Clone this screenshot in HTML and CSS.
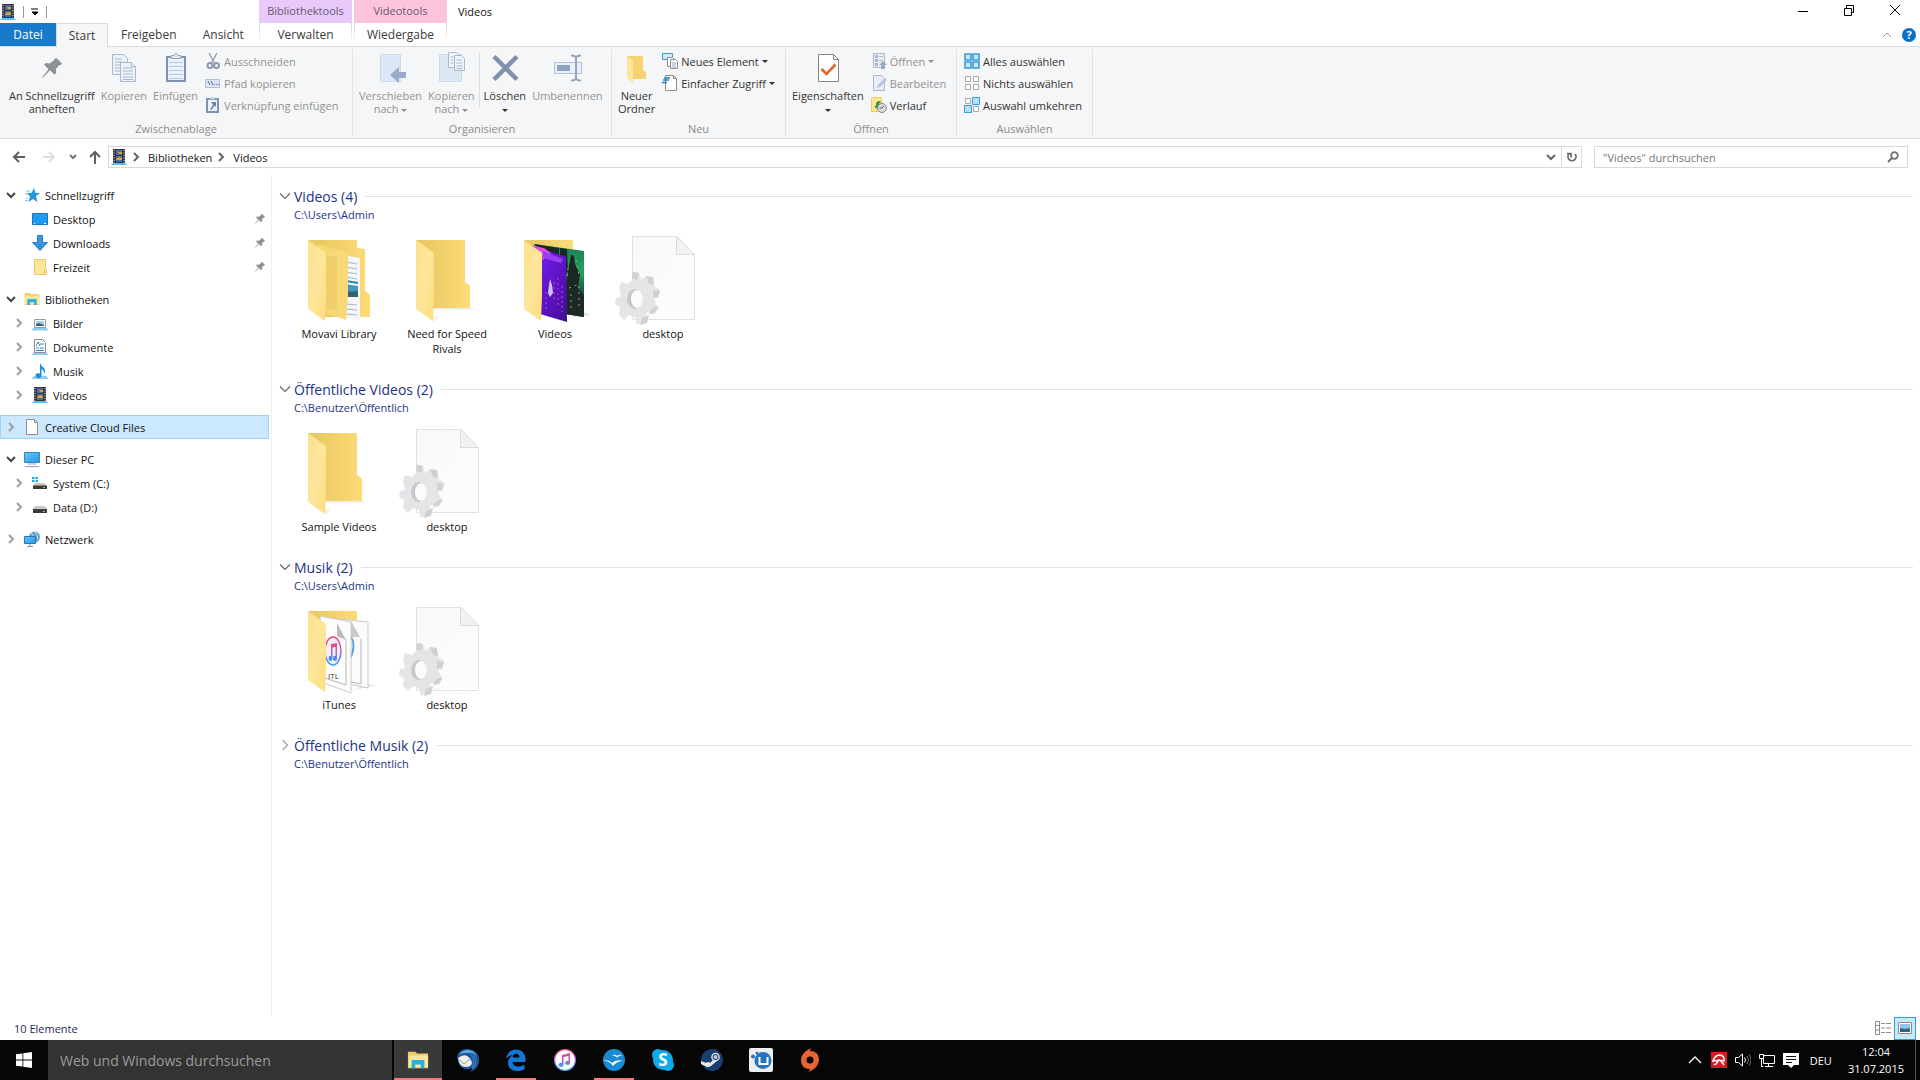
FILE: index.html
```
<!DOCTYPE html>
<html lang="de">
<head>
    <meta charset="UTF-8">
    <meta name="viewport" content="width=device-width, initial-scale=1.0">
    <title>Videos</title>
    <link rel="stylesheet" href="styles.css">
</head>
<body>
    <!-- Gemeinsame Symbole -->
    <svg class="defs" width="0" height="0" aria-hidden="true">
        <defs>
            <linearGradient id="g-front" x1="0" y1="0" x2="1" y2="1">
                <stop offset="0" stop-color="#fbdf8c"/><stop offset=".5" stop-color="#fde69c"/><stop offset="1" stop-color="#fcdc7c"/>
            </linearGradient>
            <linearGradient id="g-back" x1="0" y1="0" x2="1" y2="0">
                <stop offset=".2" stop-color="#ebca66"/><stop offset="1" stop-color="#fddc78"/>
            </linearGradient>
            <linearGradient id="g-doc" x1="0" y1="0" x2="1" y2="1">
                <stop offset="0" stop-color="#f8f8f8"/><stop offset="1" stop-color="#fdfdfd"/>
            </linearGradient>
            <linearGradient id="g-purple" x1="0" y1="0" x2="1" y2="1">
                <stop offset="0" stop-color="#c62fe0"/><stop offset=".3" stop-color="#6a1ae0"/><stop offset=".7" stop-color="#5a10b8"/><stop offset="1" stop-color="#3b0f8a"/>
            </linearGradient>
            <linearGradient id="g-green" x1="0" y1="0" x2="0" y2="1">
                <stop offset="0" stop-color="#1f7d50"/><stop offset=".4" stop-color="#23a35c"/><stop offset=".7" stop-color="#164432"/><stop offset="1" stop-color="#0a1a1c"/>
            </linearGradient>
            <linearGradient id="g-itunes" x1="0" y1="0" x2="0" y2="1">
                <stop offset="0" stop-color="#f5486c"/><stop offset=".5" stop-color="#b65bd8"/><stop offset="1" stop-color="#2fa2ee"/>
            </linearGradient>
            <linearGradient id="g-screen" x1="0" y1="0" x2="1" y2="1">
                <stop offset="0" stop-color="#6cc6f7"/><stop offset="1" stop-color="#1e96ee"/>
            </linearGradient>

            <symbol id="down" viewBox="0 0 16 16"><path d="M4 6l4 4 4-4" fill="none" stroke="currentColor" stroke-width="2"/></symbol>
            <symbol id="right" viewBox="0 0 16 16"><path d="M6 4l4 4-4 4" fill="none" stroke="currentColor" stroke-width="2"/></symbol>
            <symbol id="down-thin" viewBox="0 0 16 16"><path d="M3 5.500l5 5 5-5" fill="none" stroke="currentColor" stroke-width="1.200"/></symbol>
            <symbol id="right-thin" viewBox="0 0 16 16"><path d="M5.500 3l5 5-5 5" fill="none" stroke="currentColor" stroke-width="1.200"/></symbol>
            <symbol id="pin" viewBox="0 0 20 20"><path d="M14.200 0l5.800 5.600-1.500 1.600-1-.3-3.700 4 .4 4-1.600 1.700-4.700-4.400L1 19.500l-1 .5.500-1.200 6-7.600-4.500-4.700L3.700 5l4 .5 4.800-3.700-.2-.9z" fill="currentColor"/></symbol>
            <symbol id="film" viewBox="0 0 16 16">
                <path d="M0 14.500h2L3 13h10l1 1.500h2L15 16H1z" fill="#5cc0ee"/>
                <path d="M2 0h12v14H2z" fill="#33373c"/>
                <path d="M5 1h6v5H5zM5 7h6v6H5z" fill="#4b6ca8"/>
                <path d="M7 3h4v2H8zM5 10l3-2 3 1v2H5z" fill="#e0a33b"/>
                <path d="M3 1v13M13 1v13" stroke="#ececec" stroke-dasharray="1 1.500"/>
            </symbol>
            <symbol id="folder-big" viewBox="0 0 96 96">
                <path d="M34 76h44l-8 2H34zM34 89l7-4-7-1z" fill="#f0f0f0"/>
                <path d="M17 8h49v42l5 4v22H30z" fill="url(#g-back)"/>
                <path d="M17 8l18 13v43l-1 25-17-12z" fill="url(#g-front)"/>
            </symbol>
            <symbol id="gear-doc" viewBox="0 0 96 96">
                <path d="M17.500 4.500H62L79.500 22.500v65h-62z" fill="url(#g-doc)" stroke="#e1e1e1"/>
                <path d="M61.500 4.500v18h18z" fill="#f2f2f2" stroke="#dcdcdc"/>
                <path d="M18 40l6 1 2 7 5-4 7 2 1 8 6 4-2 7-4 2 4 9-4 5-7-1-2 9-8 4-2-8-6-2-5 5-5-5 1-8-5-3 1-6 5-1-2-9 2-6 7 2 4-4z" fill="#e3e5e7"/>
                <path d="M31 44l7 1 1 8-5-1zM38 58l7 1-2 7-5-1zM37 76l7-2-4 7-6 1zM27 86l7-3-2 8-7 2zM18 40l6 1-2 7-5-2z" fill="#cfd1d4"/>
                <ellipse cx="20" cy="67" rx="8" ry="10" fill="#c6c9cc"/>
                <ellipse cx="22" cy="67" rx="6" ry="9" fill="#fbfbfb"/>
            </symbol>
            <symbol id="explorer" viewBox="0 0 24 20">
                <path d="M1 1h8l2 2h12v16H1z" fill="#f0cd6a"/><path d="M2 5h21v13H2z" fill="#fde59a"/>
                <path d="M5 11q0-1 1-1h12q1 0 1 1v8h-4v-4H9v4H5z" fill="#27b2e2"/>
            </symbol>
            <symbol id="itunes" viewBox="0 0 24 24">
                <circle cx="12" cy="12" r="10.500" fill="#fafafe" stroke="url(#g-itunes)" stroke-width="1.200"/>
                <path d="M9 7l8-2v10a2.400 2 0 1 1-1.500-2V8L10.500 9v8A2.400 2 0 1 1 9 15z" fill="url(#g-itunes)"/>
            </symbol>
        </defs>
    </svg>

    <div class="window">
        <header class="titlebar">
            <div class="tabs-side">
                <div class="quick-access">
                    <svg width="16" height="16"><use href="#film"/></svg>
                    <span class="quick-line"></span>
                    <button class="plain" aria-label="Symbolleiste anpassen"><svg width="8" height="8" viewBox="0 0 8 8"><path d="M0 1h7M1 4h6L4 7z" stroke="#000" fill="#000"/></svg></button>
                    <span class="quick-line"></span>
                </div>
                <nav class="tabs">
                    <button class="tab tab-file">Datei</button>
                    <button class="tab tab-active">Start</button>
                    <button class="tab tab-wide">Freigeben</button>
                    <button class="tab tab-wide">Ansicht</button>
                </nav>
            </div>
            <div class="context context-library">
                <span class="context-name">Bibliothektools</span>
                <button class="tab">Verwalten</button>
            </div>
            <div class="context context-video">
                <span class="context-name">Videotools</span>
                <button class="tab">Wiedergabe</button>
            </div>
            <div class="title-side">
                <div class="title-row">
                    <h1>Videos</h1>
                    <div class="window-buttons">
                        <button class="plain" aria-label="Minimieren"><svg width="12" height="12"><path d="M1 7.500h10" stroke="#000"/></svg></button>
                        <button class="plain" aria-label="Verkleinern"><svg width="12" height="12"><path d="M1.500 4.500h7v7h-7zM3.500 4V1.500h7v7H9" fill="none" stroke="#000"/></svg></button>
                        <button class="plain" aria-label="Schließen"><svg width="12" height="12"><path d="M1 1l10 10M11 1L1 11" stroke="#000"/></svg></button>
                    </div>
                </div>
                <div class="help-row">
                    <button class="plain" aria-label="Menüband minimieren"><svg width="10" height="6"><path d="M1 5l4-4 4 4" fill="none" stroke="#9a9a9a"/></svg></button>
                    <button class="help" aria-label="Hilfe">?</button>
                </div>
            </div>
        </header>

        <section class="ribbon">
            <div class="group group-clipboard">
                <div class="group-body">
                    <button class="big">
                        <svg width="32" height="32" viewBox="0 0 32 32"><use href="#pin" x="6" y="6" width="20" height="20" color="#8b9196"/></svg>
                        <span>An Schnellzugriff<br>anheften</span>
                    </button>
                    <button class="big" disabled>
                        <svg width="32" height="32" viewBox="0 0 32 32" fill="#edf2fa" stroke="#a9b7cf"><path d="M4.500 2.500h11l4 4v16h-15z"/><path d="M7 7h7M7 10h7M7 13h7M7 16h5M7 19h5"/><path d="M12.500 10.500h11l4 4v15h-15z"/><path d="M23.500 10.500v4h4M15 16h10M15 19h10M15 22h10M15 25h10M15 27.500h10"/></svg>
                        <span>Kopieren</span>
                    </button>
                    <button class="big" disabled>
                        <svg width="32" height="32" viewBox="0 0 32 32"><path d="M7 5h18v24H7z" fill="#ecf2fc" stroke="#8193b2" stroke-width="2"/><path d="M11 3.500h3a2 2 0 0 1 4 0h3v3H11z" fill="#dfe4ec" stroke="#9ba6b8"/><path d="M9 10.500h14M9 14.500h14M9 18.500h14M9 22.500h14M9 26.500h14" stroke="#b9c9e4"/></svg>
                        <span>Einfügen</span>
                    </button>
                    <div class="small-list">
                        <button class="small" disabled><svg width="16" height="16" viewBox="0 0 16 16" fill="none" stroke="#8c99b0"><path d="M4 0l5.500 10M12 0L6.500 10" stroke-width="1.300"/><circle cx="5" cy="12.500" r="2.500" stroke-width="2"/><circle cx="11.500" cy="12.500" r="2.500" stroke-width="2"/></svg>Ausschneiden</button>
                        <button class="small" disabled><svg width="16" height="16" viewBox="0 0 16 16" fill="none"><path d="M.5 4.500h14v8H.5z" fill="#dce5f4" stroke="#b2c1da"/><path d="M3 6l2 4M6 6l2 4M9 9.500h1M11 9.500h1M13 9.500h1" stroke="#5b6f95"/></svg>Pfad kopieren</button>
                        <button class="small" disabled><svg width="16" height="16" viewBox="0 0 16 16"><path d="M2 2h11v13H2z" fill="#eef3fb" stroke="#8193b2" stroke-width="2"/><path d="M5 .5h5v2H5z" fill="#bcc7d9"/><path d="M6 5h5v5L9.500 8.500 6.500 13 5 12l3-4z" fill="#6e83aa"/></svg>Verknüpfung einfügen</button>
                    </div>
                </div>
                <div class="group-name">Zwischenablage</div>
            </div>

            <div class="group">
                <div class="group-body">
                    <button class="big" disabled>
                        <svg width="32" height="32" viewBox="0 0 32 32"><path d="M5.500 2.500h20v27h-20z" fill="#dce8f6" stroke="#ccdaec"/><path d="M15 23l9-8v5h7v6h-7v5z" fill="#9aabc9"/></svg>
                        <span>Verschieben<br>nach <i class="caret"></i></span>
                    </button>
                    <button class="big" disabled>
                        <svg width="32" height="32" viewBox="0 0 32 32"><path d="M4.500 2.500h22v27h-22z" fill="#dce8f6" stroke="#ccdaec"/><g fill="#f0f5fc" stroke="#a9b7cf"><path d="M13.500.5h8l3 3v12h-11z"/><path d="M19.500 3.500h7l3 3v12h-10z"/><path d="M21.500 8h5M21.500 11h6M21.500 14h6M21.500 16.500h6M15.500 5h3M15.500 8h3M15.500 11h3"/></g></svg>
                        <span>Kopieren<br>nach <i class="caret"></i></span>
                    </button>
                    <span class="inner-line"></span>
                    <button class="big">
                        <svg width="32" height="32" viewBox="0 0 32 32"><path d="M5 4.500l23 23M28 4.500L5 27.500" stroke="#8091af" stroke-width="4.500"/></svg>
                        <span>Löschen<br><i class="caret"></i></span>
                    </button>
                    <button class="big" disabled>
                        <svg width="32" height="32" viewBox="0 0 32 32"><path d="M3.500 10.500h27v11h-27z" fill="#e8f0fb" stroke="#adc0dc"/><path d="M6 13h13v6H6z" fill="#8fa2c3"/><path d="M20 3.500q5 0 5 3 0-3 5-3M20 28.500q5 0 5-3 0 3 5 3M25 5v22" fill="none" stroke="#94a4c0" stroke-width="2"/></svg>
                        <span>Umbenennen</span>
                    </button>
                </div>
                <div class="group-name">Organisieren</div>
            </div>

            <div class="group">
                <div class="group-body">
                    <button class="big">
                        <svg width="32" height="32" viewBox="0 0 32 32"><path d="M6 4h16v14l3 2v7H10z" fill="#f6d36f"/><path d="M6 4l6 4v23l-6-5z" fill="#fde59a"/></svg>
                        <span>Neuer<br>Ordner</span>
                    </button>
                    <div class="small-list">
                        <button class="small"><svg width="16" height="16" viewBox="0 0 16 16" fill="#fff" stroke="#8c8c8c"><path d="M.5.500h10v6H.5z" fill="#cfeafa" stroke="#4a9cc8"/><path d="M5.500 4.500h5l2 2v7h-7z"/><path d="M8.500 6.500h5l2 2v7h-7z"/><path d="M10 10h4M10 12h4M10 14h4" stroke="#9aa7b8"/></svg>Neues Element <i class="caret"></i></button>
                        <button class="small"><svg width="16" height="16" viewBox="0 0 16 16"><path d="M3.500.500h8l3 3v12h-11z" fill="#fff" stroke="#8c8c8c"/><path d="M11.500.5v3h3" fill="none" stroke="#8c8c8c"/><path d="M2 3h6M1 5h6M0 7.500h5" stroke="#2285bf" stroke-width="1.400"/></svg>Einfacher Zugriff <i class="caret"></i></button>
                    </div>
                </div>
                <div class="group-name">Neu</div>
            </div>

            <div class="group">
                <div class="group-body">
                    <button class="big">
                        <svg width="32" height="32" viewBox="0 0 32 32"><path d="M6.500 2.500h15l5 5v22h-20z" fill="#fff" stroke="#858585"/><path d="M21.500 2.500v5h5" fill="none" stroke="#858585"/><path d="M9.500 17l5 5 9-9.500" fill="none" stroke="#e4622c" stroke-width="2.600"/></svg>
                        <span>Eigenschaften<br><i class="caret"></i></span>
                    </button>
                    <div class="small-list">
                        <button class="small" disabled><svg width="16" height="16" viewBox="0 0 16 16"><path d="M2.500.5h11v14h-11z" fill="#e8eef8" stroke="#a9b7cf"/><path d="M4 2h3v3H4zM4 6h3v3H4zM4 10h3v3H4z" fill="#a9b7cf"/><path d="M8 3.500h4M8 7.500h4" stroke="#a9b7cf"/><path d="M12 8l4 4h-2v4h-4v-4H8z" fill="#9aa8c0"/></svg>Öffnen <i class="caret"></i></button>
                        <button class="small" disabled><svg width="16" height="16" viewBox="0 0 16 16"><path d="M2.500.5h8l3 3v12h-11z" fill="#e8eef8" stroke="#a9b7cf"/><path d="M6 13l1-3 7-7 2 2-7 7z" fill="#b6c3da"/></svg>Bearbeiten</button>
                        <button class="small"><svg width="16" height="16" viewBox="0 0 16 16"><path d="M.5.500h10v14H.5z" fill="#fde794" stroke="#e8cf62"/><path d="M9 4Q4 4 5 9H3l4 4 3-4H8q-.5-3 2-4z" fill="#2f9a33"/><circle cx="11" cy="11" r="4.500" fill="#ddd" stroke="#888"/><path d="M11 11l2-2M11 11H8.500" stroke="#555"/></svg>Verlauf</button>
                    </div>
                </div>
                <div class="group-name">Öffnen</div>
            </div>

            <div class="group">
                <div class="group-body">
                    <div class="small-list">
                        <button class="small"><svg width="16" height="16" viewBox="0 0 16 16"><path d="M1 1h6v6H1zM9 1h6v6H9zM1 9h6v6H1zM9 9h6v6H9z" fill="#c5e7fb" stroke="#3c9ad8" stroke-width="1.600"/></svg>Alles auswählen</button>
                        <button class="small"><svg width="16" height="16" viewBox="0 0 16 16"><path d="M1.500 1.500h5v5h-5zM9.500 1.500h5v5h-5zM1.500 9.500h5v5h-5zM9.500 9.500h5v5h-5z" fill="#fff" stroke="#a8a8a8"/></svg>Nichts auswählen</button>
                        <button class="small"><svg width="16" height="16" viewBox="0 0 16 16"><path d="M1.500 1.500h5v5h-5zM9.500 9.500h5v5h-5z" fill="#fff" stroke="#a8a8a8"/><path d="M8.500.5h7v7h-7zM.5 8.500h7v7h-7z" fill="#b5e1fa" stroke="#3c9ad8"/></svg>Auswahl umkehren</button>
                    </div>
                </div>
                <div class="group-name">Auswählen</div>
            </div>
        </section>

        <div class="address-row">
            <div class="history">
                <button class="plain" aria-label="Zurück"><svg width="14" height="14" viewBox="0 0 14 14"><path d="M13 7H2M7 2L2 7l5 5" fill="none" stroke="#5f5f5f" stroke-width="2"/></svg></button>
                <button class="plain" aria-label="Vorwärts" disabled><svg width="14" height="14" viewBox="0 0 14 14"><path d="M1 7h11M7 2l5 5-5 5" fill="none" stroke="#dedede" stroke-width="2"/></svg></button>
                <button class="plain recent" aria-label="Zuletzt besucht"><svg width="8" height="6"><path d="M1 1l3 3 3-3" fill="none" stroke="#777" stroke-width="2"/></svg></button>
                <button class="plain" aria-label="Nach oben"><svg width="14" height="14" viewBox="0 0 14 14"><path d="M7 14V2M2 7l5-5 5 5" fill="none" stroke="#5f5f5f" stroke-width="2"/></svg></button>
            </div>
            <div class="address">
                <svg width="16" height="16"><use href="#film"/></svg>
                <svg class="crumb-arrow" viewBox="3 3 10 10"><use href="#right" width="16" height="16"/></svg>
                <a href="#">Bibliotheken</a>
                <svg class="crumb-arrow" viewBox="3 3 10 10"><use href="#right" width="16" height="16"/></svg>
                <a href="#">Videos</a>
                <button class="plain address-drop" aria-label="Vorherige Orte"><svg width="16" height="16"><use href="#down"/></svg></button>
                <button class="plain refresh" aria-label="Aktualisieren"><svg width="12" height="12" viewBox="0 0 12 12"><path d="M9 3a4 4 0 1 1-6 0M1 2.500h4v4" fill="none" stroke="#666" stroke-width="1.700"/></svg></button>
            </div>
            <div class="search">
                <input type="text" aria-label="Suche" placeholder="&quot;Videos&quot; durchsuchen">
                <svg width="12" height="12" viewBox="0 0 12 12"><circle cx="7.500" cy="4.500" r="3.300" fill="none" stroke="#6e6e6e" stroke-width="1.800"/><path d="M5 7l-4 4" stroke="#6e6e6e" stroke-width="2"/></svg>
            </div>
        </div>

        <div class="content">
            <nav class="tree">
                <ul>
                    <li class="open"><svg class="toggle"><use href="#down"/></svg><svg class="icon" viewBox="0 0 16 16"><path d="M10 1l1.500 5H16l-4 3 1.500 6L9 12l-4.500 3L6 9.500 3 6h4.500z" fill="#2b96dc"/><path d="M2 4h4M1 7h3M2 11h2M1 13.500h3" stroke="#74c3f1"/></svg><a href="#">Schnellzugriff</a></li>
                    <li class="child"><span class="toggle"></span><svg class="icon" viewBox="0 0 16 16"><path d="M.5 2.500h15v11H.5z" fill="#1d9bf5" stroke="#1579bf"/><path d="M2 12.500h1M12 12.500h2" stroke="#fff"/></svg><a href="#">Desktop</a><svg class="pinned"><use href="#pin"/></svg></li>
                    <li class="child"><span class="toggle"></span><svg class="icon" viewBox="0 0 16 16"><path d="M5.500.500h5v7h5L8 15.500.5 7.500h5z" fill="#3b92de" stroke="#2b7cc6"/></svg><a href="#">Downloads</a><svg class="pinned"><use href="#pin"/></svg></li>
                    <li class="child"><span class="toggle"></span><svg class="icon" viewBox="0 0 16 16"><path d="M2.500.5h11v10l1 1v4h-12z" fill="#fde599" stroke="#e7c765"/><path d="M12.500 15v-5" stroke="#e7c765"/></svg><a href="#">Freizeit</a><svg class="pinned"><use href="#pin"/></svg></li>
                </ul>
                <ul>
                    <li class="open"><svg class="toggle"><use href="#down"/></svg><svg class="icon" viewBox="0 0 16 16"><use href="#explorer" width="16" height="16"/></svg><a href="#">Bibliotheken</a></li>
                    <li class="child"><svg class="toggle"><use href="#right"/></svg><svg class="icon" viewBox="0 0 16 16"><path d="M0 14.500l2-2h12l2 2v1H0z" fill="#8ecdf0"/><path d="M2.500 4.500h11v8h-11z" fill="#fff" stroke="#9a9a9a"/><path d="M4 6h8v5H4z" fill="#a4d0ef"/><path d="M4 9l3-1 5 2v1H4z" fill="#3f5f74"/></svg><a href="#">Bilder</a></li>
                    <li class="child"><svg class="toggle"><use href="#right"/></svg><svg class="icon" viewBox="0 0 16 16"><path d="M0 15l2-2h12l2 2v1H0z" fill="#8ecdf0"/><path d="M2.500.500h8l3 3v10h-11z" fill="#fff" stroke="#8d8d8d"/><path d="M4 7l2-4 2 4M8 5h4M4 9h3M8 9h4M4 11.500h8" fill="none" stroke="#3389b6"/></svg><a href="#">Dokumente</a></li>
                    <li class="child"><svg class="toggle"><use href="#right"/></svg><svg class="icon" viewBox="0 0 16 16"><path d="M0 15l2-2h12l2 2v1H0z" fill="#8ecdf0"/><path d="M8 0q1 3 4 5 2 2 0 6 0-4-2.500-5v6.500a3 2.500 0 1 1-1.500-2z" fill="#1790e0"/></svg><a href="#">Musik</a></li>
                    <li class="child"><svg class="toggle"><use href="#right"/></svg><svg class="icon"><use href="#film"/></svg><a href="#">Videos</a></li>
                </ul>
                <ul>
                    <li class="selected"><svg class="toggle"><use href="#right"/></svg><svg class="icon" viewBox="0 0 16 16"><path d="M2.500.500h8l3 3v12h-11z" fill="#fdfdfd" stroke="#8f8f8f"/><path d="M10.500.5v3h3" fill="none" stroke="#8f8f8f"/></svg><a href="#">Creative Cloud Files</a></li>
                </ul>
                <ul>
                    <li class="open"><svg class="toggle"><use href="#down"/></svg><svg class="icon" viewBox="0 0 16 16"><path d="M.5 1.500h15v10H.5z" fill="url(#g-screen)" stroke="#3988b7"/><path d="M4 13h8M1 15.500h14" stroke="#8ba3bf"/></svg><a href="#">Dieser PC</a></li>
                    <li class="child"><svg class="toggle"><use href="#right"/></svg><svg class="icon" viewBox="0 0 16 16"><path d="M0 2h2.500v2H0zM3.500 2H6v2H3.500zM0 5h2.500v2H0zM3.500 5H6v2H3.500z" fill="#20ace8"/><path d="M3 8h9l3 3H1z" fill="#c9c9c9"/><path d="M1 10.500h14V14H1z" fill="#3b3b3b"/><path d="M11 12.500h2" stroke="#58e05c"/></svg><a href="#">System (C:)</a></li>
                    <li class="child"><svg class="toggle"><use href="#right"/></svg><svg class="icon" viewBox="0 0 16 16"><path d="M3 7h10l2 3H1z" fill="#c9c9c9"/><path d="M1 10h14v4H1z" fill="#3b3b3b"/><path d="M11 12.500h2" stroke="#58e05c"/></svg><a href="#">Data (D:)</a></li>
                </ul>
                <ul>
                    <li><svg class="toggle"><use href="#right"/></svg><svg class="icon" viewBox="0 0 16 16"><circle cx="10.500" cy="6" r="5.500" fill="#5fa4cd"/><path d="M7 2q3 2 2 5M11 1q3 3 3 7" fill="none" stroke="#c8e6f6"/><path d="M.5 5.500h11v7H.5z" fill="url(#g-screen)" stroke="#2a78a8"/><path d="M6 13v2M3 15.500h6" stroke="#7397b0"/></svg><a href="#">Netzwerk</a></li>
                </ul>
            </nav>

            <main class="files">
                <section class="folder-group">
                    <h2><svg width="16" height="16"><use href="#down-thin"/></svg>Videos (4)</h2>
                    <p class="path">C:\Users\Admin</p>
                    <div class="items">
                        <figure>
                            <svg viewBox="0 0 96 96">
                                <path d="M17 8h49v8l8 1v42l5 4v22H30z" fill="url(#g-back)"/>
                                <path d="M52 23l17 3v63l-17-3z" fill="#f4f6f8"/>
                                <path d="M55 30l11 2M55 35l11 2M55 40l11 2M55 45l11 2M55 72l11 1M55 77l11 1M55 82l11 1" stroke="#9db8cd"/><path d="M55 49l12 2" stroke="#2a84b8" stroke-width="2"/><path d="M54 52l13 2v11H54z" fill="#4595bd"/><path d="M54 60l13-1v6H54z" fill="#2f6172"/>
                                <path d="M26 12l31 9v43l-2 24-22-8z" fill="#f8d978"/>
                                <path d="M33 24h13v52l-13 3z" fill="#ebc863" opacity=".6"/>
                                <path d="M17 8l18 13v43l-1 25-17-12z" fill="url(#g-front)"/>
                            </svg>
                            <figcaption>Movavi Library</figcaption>
                        </figure>
                        <figure>
                            <svg viewBox="0 0 96 96"><use href="#folder-big"/></svg>
                            <figcaption>Need for Speed Rivals</figcaption>
                        </figure>
                        <figure>
                            <svg viewBox="0 0 96 96">
                                <path d="M17 8h49v68H30z" fill="url(#g-back)"/>
                                <path d="M60 86l24-3-7-3z" fill="#e4e4e4"/>
                                <path d="M27 12l50 7v66l-26-4z" fill="url(#g-green)"/>
                                <path d="M27 12l25 4v20zM53 16l7 1 1 22-8 12zM64 23l3 1 1 8 5 10-2 14 6 8v21l-18-3V50z" fill="#1b2826"/>
                                <path d="M69 28l3 16M61 36l-1 10M62 56l8-3M64 62v16M72 54v22" stroke="#7fae92" stroke-dasharray="2 4"/>
                                <path d="M23 13l36 12 1 65-27-8z" fill="url(#g-purple)"/>
                                <path d="M23 13l14 3 7 5-8 7z" fill="#e04be0"/>
                                <path d="M36 19l20 8-2 4-18-5z" fill="#9a3cf0"/>
                                <path d="M42 53l1-6 2 6 1 8-3 4-2-4z" fill="#cfc4ff"/>
                                <path d="M39 60v18M47 50v20M51 46v30M55 54v26" stroke="#a050ee" stroke-dasharray="2 3"/>
                                <path d="M17 8l18 13v43l-1 25-17-12z" fill="url(#g-front)"/>
                            </svg>
                            <figcaption>Videos</figcaption>
                        </figure>
                        <figure>
                            <svg viewBox="0 0 96 96"><use href="#gear-doc"/></svg>
                            <figcaption>desktop</figcaption>
                        </figure>
                    </div>
                </section>

                <section class="folder-group">
                    <h2><svg width="16" height="16"><use href="#down-thin"/></svg>Öffentliche Videos (2)</h2>
                    <p class="path">C:\Benutzer\Öffentlich</p>
                    <div class="items">
                        <figure>
                            <svg viewBox="0 0 96 96"><use href="#folder-big"/></svg>
                            <figcaption>Sample Videos</figcaption>
                        </figure>
                        <figure>
                            <svg viewBox="0 0 96 96"><use href="#gear-doc"/></svg>
                            <figcaption>desktop</figcaption>
                        </figure>
                    </div>
                </section>

                <section class="folder-group">
                    <h2><svg width="16" height="16"><use href="#down-thin"/></svg>Musik (2)</h2>
                    <p class="path">C:\Users\Admin</p>
                    <div class="items">
                        <figure>
                            <svg viewBox="0 0 96 96">
                                <path d="M17 8h49v68H30z" fill="url(#g-back)"/>
                                <path d="M60 87l25-4-7-2z" fill="#e8e8e8"/>
                                <path d="M48 16l29 3v66l-20-4z" fill="#fbfbfb" stroke="#cacaca"/>
                                <path d="M60 18l9 16h-9z" fill="#c9c9c9"/>
                                <path d="M60 34q5 8 0 20" fill="none" stroke="#5c9fd8" stroke-width="2"/>
                                <path d="M60 79l10 2V36" fill="none" stroke="#b5b5b5"/>
                                <path d="M29 13l31 6v71l-27-10z" fill="#fdfdfd" stroke="#cacaca"/>
                                <path d="M46 20l9 17-9-4z" fill="#b8b8b8"/><path d="M55 36v46l-21-7" fill="none" stroke="#b5b5b5"/>
                                <ellipse cx="42" cy="48" rx="8" ry="14" fill="#eef0f8" stroke="url(#g-itunes)" stroke-width="1.500"/>
                                <path d="M40 41l6-1v15a2 2.500 0 1 1-1.500-2v-9l-3 .5v11A2 2.500 0 1 1 40 53z" fill="url(#g-itunes)"/>
                                <text x="37" y="76" font-size="8" fill="#333">ITL</text>
                                <path d="M17 8l18 13v43l-1 25-17-12z" fill="url(#g-front)"/>
                            </svg>
                            <figcaption>iTunes</figcaption>
                        </figure>
                        <figure>
                            <svg viewBox="0 0 96 96"><use href="#gear-doc"/></svg>
                            <figcaption>desktop</figcaption>
                        </figure>
                    </div>
                </section>

                <section class="folder-group closed">
                    <h2><svg width="16" height="16"><use href="#right-thin"/></svg>Öffentliche Musik (2)</h2>
                    <p class="path">C:\Benutzer\Öffentlich</p>
                </section>
            </main>
        </div>

        <footer class="statusbar">
            <span class="count">10 Elemente</span>
            <div class="views">
                <button class="plain" aria-label="Details"><svg width="16" height="14"><path d="M.5.500h4v13h-4zM.5 4.500h4M.5 9h4" fill="none" stroke="#8a8a8a"/><path d="M6 2.500h4M11 2.500h5M6 7h4M11 7h5M6 11.500h4M11 11.500h5" stroke="#8a8a8a"/></svg></button>
                <button class="plain view-active" aria-label="Große Symbole"><svg width="14" height="12"><path d="M.5.500h13v11H.5z" fill="#fff" stroke="#8a8a8a"/><path d="M2 2h10v8H2z" fill="#8cc5ea"/><path d="M2 6l5 1 5-1v4H2z" fill="#34647b"/></svg></button>
            </div>
        </footer>
    </div>

    <footer class="taskbar">
        <button class="start" aria-label="Start"><svg width="16" height="16" viewBox="0 0 16 16"><path d="M0 2.300l6.500-.9v6.200H0zM7.300 1.300L16 0v7.600H7.300zM0 8.400h6.500v6.200L0 13.700zM7.300 8.400H16V16l-8.700-1.200z" fill="#fff"/></svg></button>
        <input class="task-search" type="text" aria-label="Suche" placeholder="Web und Windows durchsuchen">
        <div class="apps">
            <button class="app running current" aria-label="Explorer"><svg width="22" height="20" viewBox="0 0 24 20"><use href="#explorer"/></svg></button>
            <button class="app" aria-label="Thunderbird"><svg width="24" height="24" viewBox="0 0 24 24"><path d="M2 8Q5 0 13 1q11 1 11 11 0 9-9 12 2-2 2-4-6 3-11-1-3-3-4-11z" fill="#1c579c"/><path d="M4 7q3-5 9-5 7 1 9 7-4-5-9-4-5-1-9 2z" fill="#62b1e4"/><path d="M19 8q4 6-1 13M16 6q5 6 1 14" fill="none" stroke="#3a86c8"/><path d="M3 10q5-4 9-2 4 2 5 7-1 4-6 4-7 0-8-9z" fill="#f1efe6"/><path d="M3 11l6 5 6-5" fill="none" stroke="#a8a08c"/></svg></button>
            <button class="app running" aria-label="Edge"><svg width="24" height="24" viewBox="0 0 24 24"><path d="M2 11C3 4.500 7 1.500 12 1.500c6 0 9.500 4.500 9.500 9.500v3H8.500c.2 3 2.500 4.500 5.500 4.500 2.500 0 4.500-.6 6.500-1.800v4.500c-2 1.200-4.500 1.800-7 1.800C7.500 23 4 19.500 4 15c0-3.500 2-6.500 5-8-2.500.2-5 1.500-7 4zm6.500-1.500h7c0-2.500-1.300-3.800-3.300-3.800S9 7.200 8.500 9.500z" fill="#1277d7"/></svg></button>
            <button class="app" aria-label="iTunes"><svg width="24" height="24"><use href="#itunes"/></svg></button>
            <button class="app running" aria-label="OpenOffice"><svg width="24" height="24" viewBox="0 0 24 24"><circle cx="12" cy="12" r="11" fill="#1a8bd3"/><path d="M1 12.500q6-1 9 2.500 4-4 11-2-6 0-10 5-3-5-10-5.500zM10 7q4-1 5 1 2-2 6-1-4 0-6 2.500-2-2-5-2.500z" fill="#fff"/></svg></button>
            <button class="app" aria-label="Skype"><svg width="24" height="24" viewBox="0 0 24 24"><circle cx="7" cy="7" r="6" fill="#12a9ea"/><circle cx="17" cy="17" r="6" fill="#12a9ea"/><circle cx="12" cy="12" r="10" fill="#12a9ea"/><text x="12" y="18" text-anchor="middle" font-size="17" font-weight="700" fill="#fff">S</text></svg></button>
            <button class="app" aria-label="Steam"><svg width="24" height="24" viewBox="0 0 24 24"><circle cx="12" cy="12" r="11" fill="#183f6e"/><path d="M1 13l8 3 6-6 3 2-7 6-4 1-6-3z" fill="#e6e8eb"/><circle cx="15.500" cy="9" r="3.600" fill="#183f6e" stroke="#e6e8eb" stroke-width="1.400"/><circle cx="15.500" cy="9" r="2" fill="#c7cbd1"/><circle cx="8" cy="16.500" r="2.500" fill="#e6e8eb"/></svg></button>
            <button class="app" aria-label="Uplay"><svg width="24" height="24" viewBox="0 0 24 24"><path d="M2 0h20q2 0 2 2v20q0 2-2 2H2q-2 0-2-2V2q0-2 2-2z" fill="#eceef0"/><circle cx="14" cy="12.500" r="8.500" fill="#2672bd"/><circle cx="4" cy="8.500" r="2" fill="#2672bd"/><circle cx="8" cy="5" r="1.500" fill="#2672bd"/><path d="M10.500 9v7h8V9" fill="none" stroke="#fff" stroke-width="2"/></svg></button>
            <button class="app" aria-label="Origin"><svg width="24" height="24" viewBox="0 0 24 24"><path d="M13 0q-1 2-1 3 9 0 9 9 0 7-10 12 1-2 1-3-9 0-9-9 0-7 10-12zM12 8.500a3.500 3.500 0 1 0 0 7 3.500 3.500 0 1 0 0-7z" fill="#ea6333"/></svg></button>
        </div>
        <div class="tray">
            <svg width="16" height="16"><path d="M2 11l6-6 6 6" fill="none" stroke="#fff" stroke-width="1.300"/></svg>
            <svg width="16" height="16"><path d="M0 0h16v16H0z" fill="#dd1a22"/><path d="M2 9Q4 3 9 3q5 1 4 6-2-1-3 0-2-2-4 0-2-1-4 0zM8 8l-3 4q-1 1-2 0M10 9l3 4" fill="none" stroke="#fff" stroke-width="1.400"/></svg>
            <svg width="16" height="16" fill="none"><path d="M.5 5.500h3l4-3.500v12l-4-3.500h-3z" stroke="#fff"/><path d="M9.500 5.500q2 2.500 0 5" stroke="#fff"/><path d="M12 4q3 4 0 8M14 2.500q4 5.500 0 11" stroke="#777"/></svg>
            <svg width="16" height="16" fill="none" stroke="#fff"><path d="M4 3.500h11.500v8h-11V7M.5 2.500h4v4h-4zM2.500 6.500v8h2M9.500 11.500v3M6 14.500h8"/></svg>
            <svg width="16" height="16"><path d="M0 1h16v12h-5l-3 3-3-3H0z" fill="#fff"/><path d="M3 4.500h10M3 7.500h10M3 10.500h6" stroke="#111"/></svg>
            <span>DEU</span>
            <time class="clock">12:04<br>31.07.2015</time>
        </div>
    </footer>
</body>
</html>
```
FILE: styles.css
```
* {
    box-sizing: border-box;
}
body {
    margin: 0;
    min-height: 100vh;
    display: flex;
    flex-direction: column;
    font-family: "Segoe UI", "Open Sans", "Noto Sans", sans-serif;
    font-size: 11px;
    line-height: 15px;
    color: #111;
    background: #fff;
}
button, input {
    font: inherit;
    color: inherit;
    border: 0;
    padding: 0;
    background: none;
}
svg {
    flex: none;
    display: block;
}
a {
    color: inherit;
    text-decoration: none;
}
.defs {
    position: absolute;
}
.window {
    flex: 1;
    display: flex;
    flex-direction: column;
}
.plain {
    display: flex;
    align-items: center;
    justify-content: center;
}

/* Titelleiste und Register */
.titlebar {
    display: flex;
    height: 46px;
    gap: 2px;
}
.tabs-side {
    width: 257px;
}
.quick-access {
    display: flex;
    align-items: center;
    height: 23px;
    gap: 7px;
}
.quick-line {
    width: 1px;
    height: 12px;
    background: #999;
}
.tabs {
    display: flex;
    height: 24px;
}
.tab {
    height: 23px;
    font-size: 12px;
    color: #3b3b3b;
}
.tab-file {
    width: 56px;
    color: #fff;
    background: #1979ca;
}
.tab-active {
    width: 52px;
    height: 24px;
    position: relative;
    border: 1px solid #dadbdc;
    border-bottom: 0;
    background: #f5f6f7;
}
.tab-wide {
    flex: 1;
    padding-left: 7px;
}
.context {
    width: 93px;
    display: flex;
    flex-direction: column;
    text-align: center;
}
.context-name {
    height: 23px;
    line-height: 21px;
    color: #665b6b;
}
.context .tab {
    border: solid;
    border-width: 0 1px;
    border-image: linear-gradient(#ccc, #fff 80%) 1;
}
.context-library .context-name {
    background: #e8c9fc;
}
.context-video .context-name {
    background: #fdc4de;
}
.title-side {
    flex: 1;
}
.title-row {
    display: flex;
    justify-content: space-between;
    height: 23px;
}
.title-row h1 {
    margin: 0;
    padding-left: 9px;
    font-size: 11px;
    font-weight: 400;
    line-height: 24px;
}
.window-buttons {
    display: flex;
    height: 20px;
    padding-right: 2px;
}
.window-buttons .plain {
    width: 46px;
}
.help-row {
    display: flex;
    justify-content: flex-end;
    align-items: center;
    gap: 10px;
    height: 23px;
    padding-right: 4px;
}
.help {
    width: 14px;
    height: 14px;
    border-radius: 50%;
    font-weight: 700;
    line-height: 14px;
    color: #fff;
    background: #0a6fcb;
}

/* Menüband */
.ribbon {
    display: grid;
    grid-template-columns: 353px 259px 174px 171px 136px;
    height: 93px;
    padding: 2px 0;
    border: solid #dadbdc;
    border-width: 1px 0;
    background: #f5f6f7;
}
.group {
    display: flex;
    flex-direction: column;
    border-right: 1px solid #e2e3e4;
}
.group-body {
    flex: 1;
    display: flex;
    align-items: flex-start;
    padding: 3px 4px 0;
    gap: 2px;
}
.group-clipboard .group-body {
    padding-left: 7px;
}
.group-name {
    height: 15px;
    text-align: center;
    color: #8c8c8c;
}
.big {
    display: flex;
    flex-direction: column;
    align-items: center;
    padding: 0 2px;
    line-height: 13px;
    color: #333;
}
.big span {
    margin-top: 5px;
}
.small-list {
    display: flex;
    flex-direction: column;
    margin-top: -2px;
    padding-left: 3px;
}
.small {
    display: flex;
    align-items: center;
    gap: 3px;
    height: 22px;
    white-space: nowrap;
    color: #333;
}
.big:disabled, .small:disabled {
    color: #929292;
}
.caret {
    display: inline-block;
    vertical-align: middle;
    border: solid transparent;
    border-width: 3px 3px 0;
    border-top-color: currentColor;
}
.inner-line {
    width: 1px;
    height: 55px;
    background: #dcdddf;
}

/* Adresszeile */
.address-row {
    display: flex;
    align-items: center;
    height: 36px;
    padding-right: 12px;
}
.history {
    display: flex;
    align-items: center;
    width: 108px;
    padding-left: 12px;
    gap: 16px;
}
.history .recent {
    margin: 0 -5px 0 -3px;
}
.address {
    flex: 1;
    display: flex;
    align-items: center;
    height: 22px;
    padding-left: 2px;
    border: 1px solid #d9d9d9;
}
.crumb-arrow {
    width: 10px;
    height: 10px;
    margin: 0 7px 0 4px;
    color: #666;
}
.address-drop {
    margin: 0 2px 0 auto;
    color: #666;
}
.refresh {
    width: 20px;
    height: 20px;
    border-left: 1px solid #d9d9d9;
}
.search {
    display: flex;
    align-items: center;
    width: 314px;
    height: 22px;
    margin-left: 12px;
    padding: 0 8px;
    border: 1px solid #d9d9d9;
}
.search input {
    flex: 1;
    outline: 0;
}
.search input::placeholder {
    color: #767676;
    opacity: 1;
}

/* Navigationsbereich */
.content {
    flex: 1;
    display: flex;
}
.tree {
    width: 272px;
    padding: 8px 2px 0 0;
    border-right: 1px solid #f0f0f0;
}
.tree ul {
    margin: 0 0 8px;
    padding: 0;
    list-style: none;
}
.tree li {
    display: flex;
    align-items: center;
    height: 24px;
    padding: 0 3px 0 2px;
    border: 1px solid transparent;
}
.tree .child {
    padding-left: 10px;
}
.tree .selected {
    border-color: #99d1ff;
    background: #cce8ff;
}
.toggle {
    width: 16px;
    height: 16px;
    color: #a0a0a0;
}
.open .toggle {
    color: #444;
}
.icon {
    width: 16px;
    height: 16px;
    margin: 0 5px;
}
.pinned {
    width: 10px;
    height: 10px;
    margin-left: auto;
    color: #8b9196;
}

/* Dateiliste */
.files {
    flex: 1;
    padding: 9px 7px 0;
}
.folder-group {
    padding-bottom: 21px;
}
.folder-group h2 {
    display: flex;
    align-items: center;
    margin: 0;
    height: 24px;
    font-size: 14px;
    font-weight: 400;
    color: #1e3287;
}
.folder-group h2 svg {
    margin: 0 1px 0 -2px;
    color: #666;
}
.closed h2 svg {
    color: #a0a0a0;
}
.folder-group h2::after {
    content: "";
    flex: 1;
    height: 1px;
    margin-left: 8px;
    background: #e2e2e2;
}
.path {
    margin: 0 0 10px 15px;
    line-height: 14px;
    color: #1e3287;
}
.items {
    display: flex;
    padding-left: 6px;
}
.items figure {
    width: 108px;
    margin: 0;
    padding: 0 10px;
    display: flex;
    flex-direction: column;
    align-items: center;
}
.items figure svg {
    width: 96px;
    height: 96px;
}
.items figcaption {
    margin-top: -2px;
    text-align: center;
}

/* Statusleiste */
.statusbar {
    display: flex;
    justify-content: space-between;
    align-items: center;
    height: 24px;
    padding: 0 4px 0 14px;
    color: #1e2858;
}
.views {
    display: flex;
}
.views .plain {
    width: 22px;
    height: 23px;
}
.views .view-active {
    border: 1px solid #26a0da;
    background: #cbe8f6;
}

/* Taskleiste */
.taskbar {
    display: flex;
    height: 40px;
    color: #fff;
    background: #060606;
}
.start {
    width: 48px;
    display: flex;
    align-items: center;
    justify-content: center;
}
.task-search {
    width: 344px;
    padding: 0 12px;
    font-size: 14px;
    background: #333;
}
.task-search::placeholder {
    color: #9c9c9c;
    opacity: 1;
}
.apps {
    display: flex;
    gap: 1px;
    margin-left: 2px;
}
.app {
    position: relative;
    display: flex;
    align-items: center;
    justify-content: center;
    width: 48px;
}
.app.running::after {
    content: "";
    position: absolute;
    left: 4px;
    right: 4px;
    bottom: 0;
    height: 2px;
    background: #f47c7c;
}
.app.current {
    background: #393939;
}
.app.current::after {
    left: 0;
    right: 0;
}
.tray {
    display: flex;
    align-items: center;
    gap: 8px;
    margin: 0 4px 0 auto;
    padding-right: 11px;
    border-right: 1px solid #555;
}
.tray span {
    margin: 0 8px 0 3px;
}
.clock {
    text-align: center;
    line-height: 17px;
}
```
